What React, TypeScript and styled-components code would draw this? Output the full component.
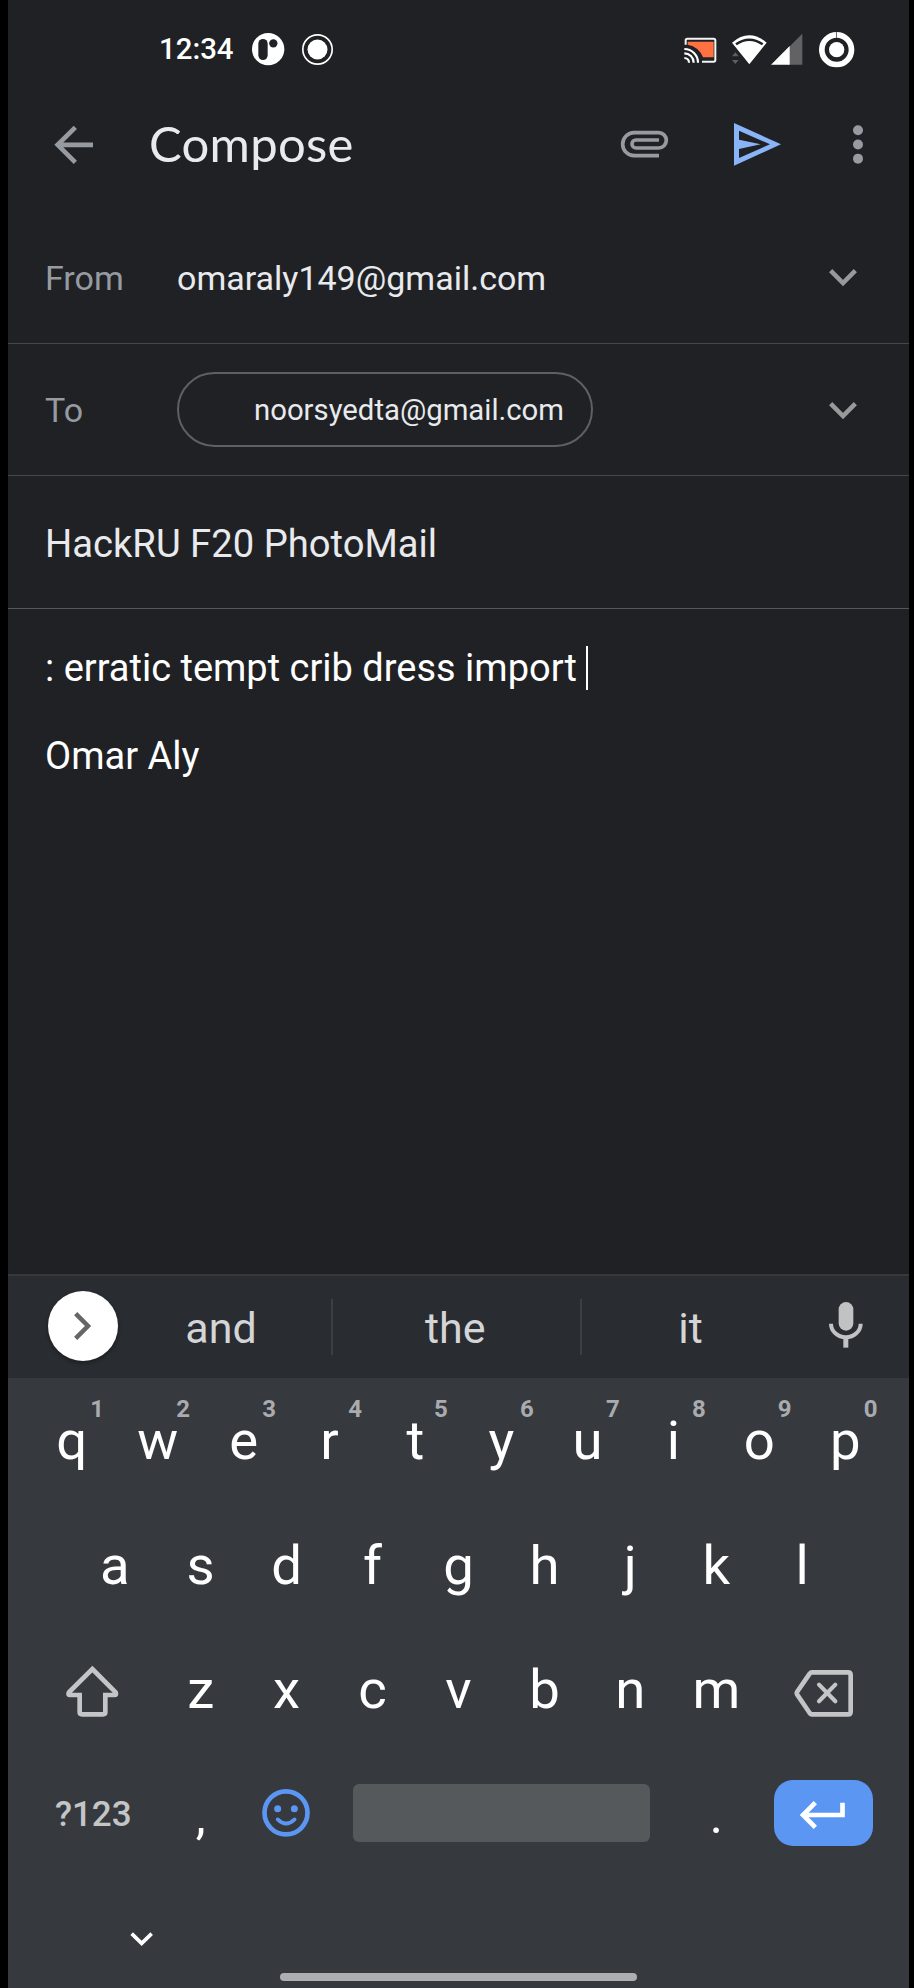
import React from "react";
import styled, { createGlobalStyle } from "styled-components";

const color = {
  screen: "#202124",
  strip: "#292c30",
  keyboard: "#36393e",
  line: "#46474b",
  text: "#e8eaed",
  muted: "#969ba1",
  key: "#ffffff",
  keyMuted: "#c4c5c7",
  accent: "#5b96f3",
};

const GlobalStyle = createGlobalStyle`
  body { margin: 0; background: #000; font-family: Roboto, "Liberation Sans", sans-serif; }
  * { box-sizing: border-box; }
`;

const Screen = styled.main`
  display: flex;
  flex-direction: column;
  width: 901px;
  height: 1988px;
  margin-left: 8px;
  background: ${color.screen};
  color: ${color.text};
  overflow: hidden;
`;

/* Icons are authored on a grid of three units to the pixel. */
const Svg = styled.svg`
  display: block;
  flex: none;
  overflow: visible;
`;

type IconProps = { w: number; h: number; x?: number; y?: number; children: React.ReactNode };
const Icon = ({ w, h, x = 0, y = 0, children }: IconProps) => (
  <Svg width={w / 3} height={h / 3} viewBox={`${x} ${y} ${w} ${h}`} fill="none">
    {children}
  </Svg>
);

const StatusBar = styled.header`
  display: flex;
  align-items: center;
  height: 99px;
  padding: 0 54.5px 0 151px;
`;

const Clock = styled.time`
  width: 93px;
  padding-bottom: 1px;
  font-size: 29.4px;
  font-weight: 500;
  line-height: 36px;
  color: #fff;
`;

const StatusGroup = styled.div<{ $gap: number; $push?: boolean }>`
  display: flex;
  align-items: center;
  gap: ${(p) => p.$gap}px;
  margin-left: ${(p) => (p.$push ? "auto" : "0")};
`;

const Toolbar = styled.div`
  display: flex;
  align-items: center;
  height: 91px;
  margin-bottom: 21.3px;
  padding: 0 46.3px 0 47px;
`;

const Title = styled.h1`
  margin: 0 auto 0 56px;
  padding-bottom: 4px;
  font-family: Lato, Roboto, sans-serif;
  font-size: 49px;
  font-weight: 400;
  line-height: 58px;
  letter-spacing: 0.3px;
  color: ${color.text};
`;

const ToolbarActions = styled.div`
  display: flex;
  align-items: center;
`;

const ActionButton = styled.div<{ $before?: number }>`
  margin-left: ${(p) => p.$before ?? 0}px;
`;

const Field = styled.div<{ $strong?: boolean }>`
  display: flex;
  align-items: center;
  height: 132.6px;
  padding: 1px 52px 0 37px;
  border-bottom: 1.5px solid ${(p) => (p.$strong ? "#56575c" : color.line)};
`;

const FieldLabel = styled.span`
  width: 132px;
  font-size: 34px;
  color: ${color.muted};
`;

const FieldValue = styled.span`
  font-size: 34px;
`;

const FieldToggle = styled.div`
  margin-left: auto;
`;

const Recipient = styled.span`
  display: flex;
  align-items: center;
  height: 75px;
  margin-bottom: 1px;
  padding: 0 26.5px 0 75px;
  border: 2px solid #5f6065;
  border-radius: 37.5px;
  font-size: 29.3px;
`;

const Subject = styled.span`
  padding-top: 3px;
  font-size: 38.2px;
`;

const MessageBody = styled.section`
  flex: 1;
  padding: 36.7px 37px 0;
  font-size: 38px;
  line-height: 44.2px;
  color: #fff;
`;

const Paragraph = styled.p`
  display: flex;
  align-items: center;
  margin: 0 0 44.2px;
  white-space: pre;
`;

const Caret = styled.span`
  width: 2px;
  height: 44px;
  background: #fff;
`;

const Keyboard = styled.section`
  display: flex;
  flex-direction: column;
  height: 714px;
  background: ${color.keyboard};
`;

const SuggestionStrip = styled.div`
  display: flex;
  align-items: center;
  height: 104px;
  padding: 0 46px 0 39.5px;
  border-top: 2px solid #36383c;
  background: ${color.strip};
`;

const ExpandButton = styled.div`
  display: flex;
  align-items: center;
  justify-content: center;
  width: 70.5px;
  height: 70.5px;
  margin-bottom: 2px;
  border-radius: 50%;
  background: #fff;
  box-shadow: 0 2px 4px rgba(0, 0, 0, 0.35);
`;

const Suggestion = styled.span<{ $width: number; $nudge?: number }>`
  width: ${(p) => p.$width}px;
  padding: 1px ${(p) => p.$nudge ?? 0}px 0 0;
  font-size: 43px;
  line-height: 50px;
  text-align: center;
  color: #d4d5d7;
`;

const StripDivider = styled.span`
  width: 2px;
  height: 56.5px;
  background: #3d3f44;
`;

const KeyRow = styled.div`
  display: flex;
  justify-content: center;
  height: 124.5px;
`;

const Key = styled.div<{ $units?: number }>`
  position: relative;
  display: flex;
  align-items: center;
  justify-content: center;
  width: ${(p) => (p.$units ?? 1) * 85.95}px;
  font-size: 54.5px;
  line-height: 64px;
  color: ${color.key};
`;

const KeyHint = styled.span`
  position: absolute;
  top: 17px;
  left: 61.5px;
  font-size: 24px;
  font-weight: 700;
  line-height: 28px;
  color: #a9abae;
`;

const KeyIcon = styled.div<{ $right?: number; $top?: number; $bottom?: number }>`
  padding: ${(p) => `${p.$top ?? 0}px ${p.$right ?? 0}px ${p.$bottom ?? 0}px 0`};
`;

const SymbolsLabel = styled.span`
  padding-top: 3px;
  font-size: 35px;
  font-weight: 500;
  color: ${color.keyMuted};
`;

const Punctuation = styled.span`
  padding-top: 5px;
  font-size: 50px;
`;

const SpaceBar = styled.div`
  width: 297px;
  height: 58px;
  margin-bottom: 2px;
  border-radius: 6px;
  background: #55595c;
`;

const EnterButton = styled.div`
  display: flex;
  align-items: center;
  justify-content: center;
  width: 99px;
  height: 66.5px;
  margin-bottom: 2px;
  padding: 4px 2px 0 0;
  border-radius: 19px;
  background: ${color.accent};
`;

const NavBar = styled.nav`
  display: flex;
  flex: 1;
  flex-direction: column;
  justify-content: space-between;
  padding: 56px 0 7px;
`;

const HideKeyboard = styled.div`
  padding-left: 122px;
`;

const HomeHandle = styled.div`
  align-self: center;
  width: 357px;
  height: 8px;
  border-radius: 4px;
  background: #adaeb1;
`;

const ChevronDown = () => (
  <Icon w={84} h={51} x={1117} y={147}>
    <path d="M1122 152 1159 189 1196 152" stroke="#999" strokeWidth="13.5" />
  </Icon>
);

const topRow = ["q", "w", "e", "r", "t", "y", "u", "i", "o", "p"];

export default function App() {
  return (
    <>
      <GlobalStyle />
      <Screen>
        <StatusBar>
          <Clock>12:34</Clock>
          <StatusGroup $gap={17.5}>
            <Icon w={97} h={97} x={756} y={100}>
              <circle cx="804.5" cy="148.5" r="48.5" fill="#fff" />
              <rect x="775" y="118" width="28" height="63" rx="14" fill={color.screen} />
              <circle cx="820" cy="131" r="12.5" fill={color.screen} />
            </Icon>
            <Icon w={93} h={93} x={906} y={102}>
              <circle cx="952.5" cy="148.5" r="44" stroke="#fff" strokeWidth="5" />
              <circle cx="952.5" cy="148.5" r="30" fill="#fff" />
            </Icon>
          </StatusGroup>
          <StatusGroup $gap={0} $push>
            <Icon w={143} h={106} x={681} y={96}>
              <path d="M686 134V121q0-5 5-5H770q5 0 5 5V180q0 5-5 5H735" stroke="#f4f4f4" strokeWidth="6" />
              <path d="M692 125H770V172H738A61 61 0 0 0 692 134Z" fill="#ff7043" />
              <path
                d="M682 147A41 41 0 0 1 723 188M682 160A28 28 0 0 1 710 188M682 174A14 14 0 0 1 696 188"
                stroke="#fff"
                strokeWidth="6.5"
              />
            </Icon>
            <Icon w={117} h={106} x={824} y={96}>
              <path d="M834 157 844 169H824ZM834 192 844 180H824Z" fill="#5d5e61" />
              <path d="M824 128Q876 84 928 128L876 193Z" fill="#fff" />
              <path d="M836 133Q876 105 916 133" stroke={color.screen} strokeWidth="7.5" />
            </Icon>
            <Icon w={145} h={106} x={941} y={96}>
              <path d="M1035 101V194H990V146Z" fill="#626265" />
              <path d="M941 194 997 138V194Z" fill="#fff" />
            </Icon>
            <Icon w={106} h={106} x={1086} y={96}>
              <circle cx="1139" cy="149" r="44.5" stroke="#fff" strokeWidth="17" />
              <circle cx="1139" cy="149" r="23" fill="#fff" />
              <path d="M1138.500 96V114" stroke="#6a6a6c" strokeWidth="3" />
            </Icon>
          </StatusGroup>
        </StatusBar>

        <Toolbar>
          <Icon w={114} h={114} x={165} y={378}>
            <path d="M226 382 173 434.500 226 487M173 434.500H279" stroke={color.muted} strokeWidth="14" />
          </Icon>
          <Title>Compose</Title>
          <ToolbarActions>
            <Icon w={142} h={80} x={492} y={396}>
              <path
                d="M606 470H531.500A34.500 34.500 0 0 1 531.500 401H605A23 23 0 0 1 605 447H537A12 12 0 0 1 537 423H606"
                stroke={color.muted}
                strokeWidth="11"
              />
            </Icon>
            <ActionButton $before={66.3}>
              <Icon w={141} h={132} x={832} y={368}>
                <path
                  fillRule="evenodd"
                  fill="#8ab4f8"
                  d="M832 368 973 432 832 496ZM847 391V418L912 432 847 446V473L940 432Z"
                />
              </Icon>
            </ActionButton>
            <ActionButton $before={71.3}>
              <Icon w={30} h={116} x={1187} y={376}>
                <g fill={color.muted}>
                  <circle cx="1202" cy="391.500" r="15" />
                  <circle cx="1202" cy="434.500" r="15" />
                  <circle cx="1202" cy="477" r="15" />
                </g>
              </Icon>
            </ActionButton>
          </ToolbarActions>
        </Toolbar>

        <Field>
          <FieldLabel>From</FieldLabel>
          <FieldValue>omaraly149@gmail.com</FieldValue>
          <FieldToggle>
            <ChevronDown />
          </FieldToggle>
        </Field>
        <Field>
          <FieldLabel>To</FieldLabel>
          <Recipient>noorsyedta@gmail.com</Recipient>
          <FieldToggle>
            <ChevronDown />
          </FieldToggle>
        </Field>
        <Field $strong>
          <Subject>HackRU F20 PhotoMail</Subject>
        </Field>

        <MessageBody>
          <Paragraph>
            {": erratic tempt crib dress import "}
            <Caret />
          </Paragraph>
          <Paragraph>Omar Aly</Paragraph>
        </MessageBody>

        <Keyboard>
          <SuggestionStrip>
            <ExpandButton>
              <Icon w={52} h={84} x={221} y={156}>
                <path d="M226 161 263 198 226 235" stroke="#666" strokeWidth="13.5" />
              </Icon>
            </ExpandButton>
            <Suggestion $width={213} $nudge={7}>
              and
            </Suggestion>
            <StripDivider />
            <Suggestion $width={246.6} $nudge={2}>
              the
            </Suggestion>
            <StripDivider />
            <Suggestion $width={218}>it</Suggestion>
            <FieldToggle>
              <Icon w={101} h={145} x={1116} y={130}>
                <rect x="1145" y="127" width="44" height="86" rx="22" fill="#c1c2c4" />
                <path d="M1122 192A44.500 41 0 0 0 1211 192" stroke="#c1c2c4" strokeWidth="12" />
                <path d="M1166.500 232V264" stroke="#c1c2c4" strokeWidth="15" />
              </Icon>
            </FieldToggle>
          </SuggestionStrip>

          <KeyRow>
            {topRow.map((letter, i) => (
              <Key key={letter}>
                {letter}
                <KeyHint>{(i + 1) % 10}</KeyHint>
              </Key>
            ))}
          </KeyRow>
          <KeyRow>
            {[..."asdfghjkl"].map((letter) => (
              <Key key={letter}>{letter}</Key>
            ))}
          </KeyRow>
          <KeyRow>
            <Key $units={1.5}>
              <KeyIcon $right={2}>
                <Icon w={158} h={138} x={198} y={498}>
                  <path
                    d="M277 507 347 577Q351 585 343 585H316V637Q316 643 309 643H246Q239 643 239 637V585H211Q202 585 207 577Z"
                    stroke={color.keyMuted}
                    strokeWidth="14"
                  />
                </Icon>
              </KeyIcon>
            </Key>
            {[..."zxcvbnm"].map((letter) => (
              <Key key={letter}>{letter}</Key>
            ))}
            <Key $units={1.5}>
              <KeyIcon $right={1} $top={9}>
                <Icon w={177} h={140} x={1010} y={513}>
                  <path
                    d="M1064 520H1172Q1180 520 1180 528V638Q1180 646 1172 646H1064Q1060 646 1057 642L1019 586Q1017 582 1019 579L1057 524Q1060 520 1064 520Z"
                    stroke={color.keyMuted}
                    strokeWidth="14"
                  />
                  <path
                    d="M1085 557 1134 607M1134 557 1085 607"
                    stroke={color.keyMuted}
                    strokeWidth="12.5"
                    strokeLinecap="round"
                  />
                </Icon>
              </KeyIcon>
            </Key>
          </KeyRow>
          <KeyRow>
            <Key $units={1.5}>
              <SymbolsLabel>?123</SymbolsLabel>
            </Key>
            <Key>
              <Punctuation>,</Punctuation>
            </Key>
            <Key>
              <KeyIcon $right={2} $bottom={2}>
                <Icon w={144} h={144} x={785} y={148}>
                  <g stroke={color.accent}>
                    <circle cx="857" cy="219.500" r="64.500" strokeWidth="14" />
                    <path d="M832 239Q857 264 883 239" strokeWidth="11" strokeLinecap="round" />
                  </g>
                  <g fill={color.accent}>
                    <circle cx="832" cy="207" r="10.500" />
                    <circle cx="882" cy="207" r="10.500" />
                  </g>
                </Icon>
              </KeyIcon>
            </Key>
            <Key $units={4}>
              <SpaceBar />
            </Key>
            <Key>
              <Punctuation>.</Punctuation>
            </Key>
            <Key $units={1.5}>
              <EnterButton>
                <Icon w={135} h={84} x={1029} y={185}>
                  <path d="M1075 190 1038 227 1075 264M1038 227H1156.500V190" stroke="#fff" strokeWidth="14" />
                </Icon>
              </EnterButton>
            </Key>
          </KeyRow>

          <NavBar>
            <HideKeyboard>
              <Icon w={70} h={43} x={390} y={577}>
                <path d="M395 582 425 611 455 582" stroke="#fff" strokeWidth="11" />
              </Icon>
            </HideKeyboard>
            <HomeHandle />
          </NavBar>
        </Keyboard>
      </Screen>
    </>
  );
}
